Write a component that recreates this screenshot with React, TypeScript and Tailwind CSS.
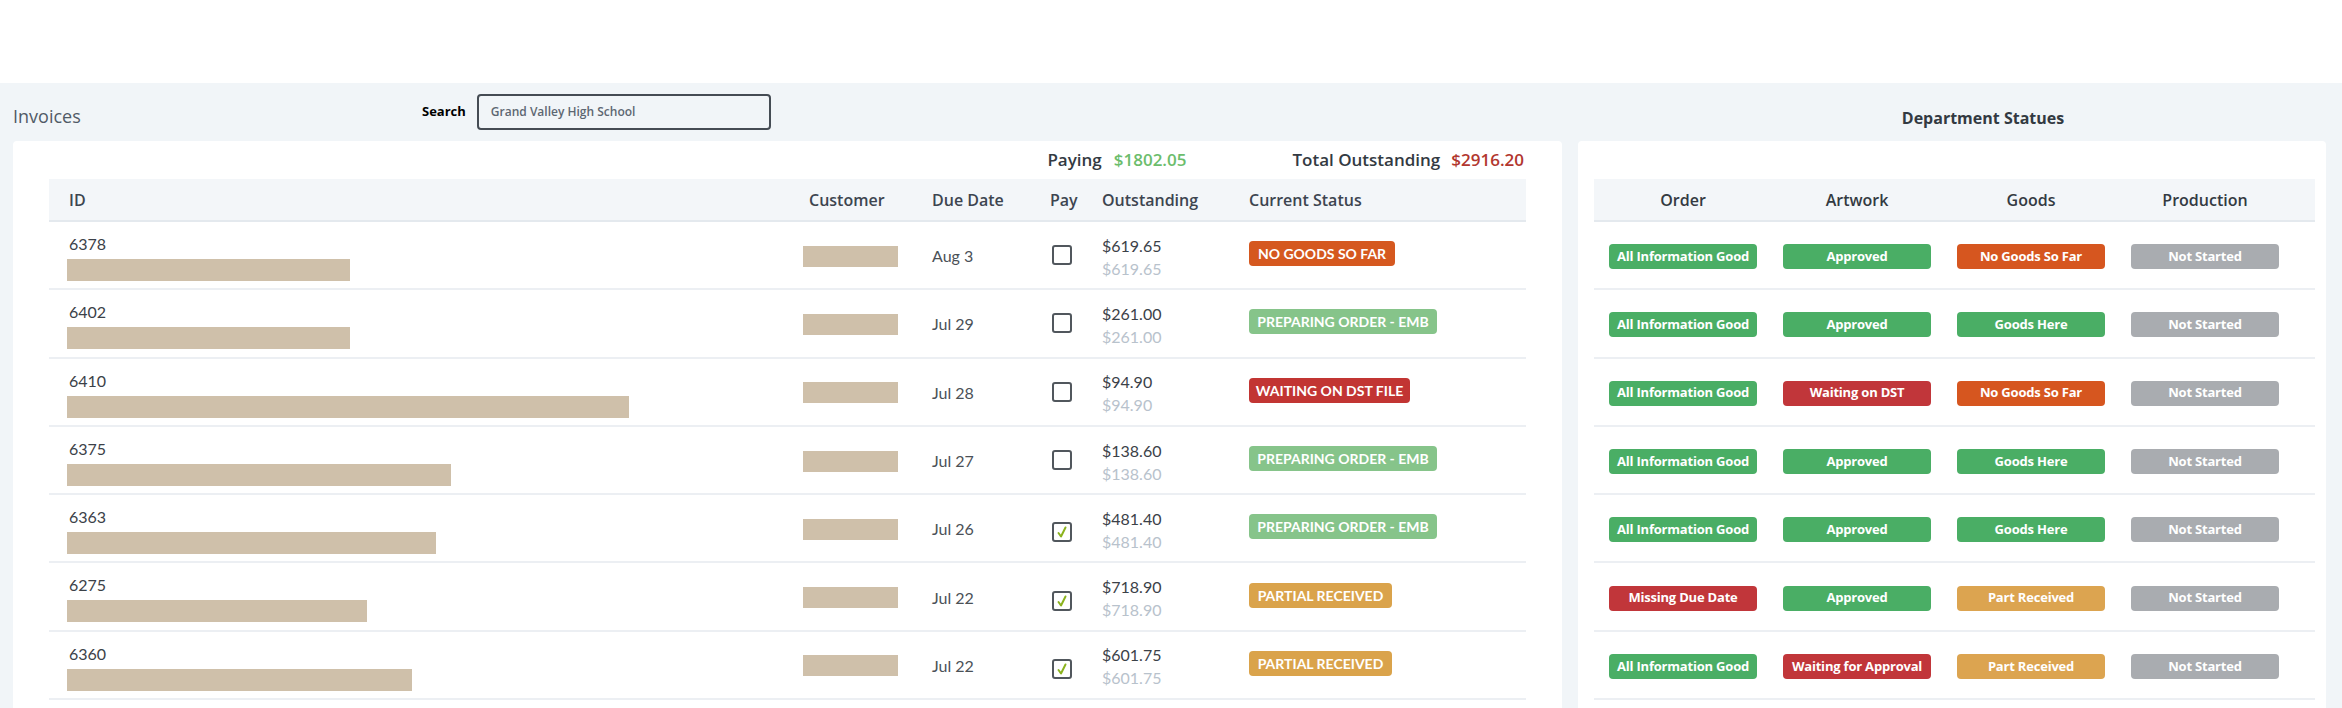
import React from "react";

type Row = {
  id: string;
  bar: number;
  date: string;
  checked: boolean;
  amt: string;
  status: string;
  sc: string;
  sw: string;
};

const rows: Row[] = [
  { id: "6378", bar: 283, date: "Aug 3", checked: false, amt: "$619.65", status: "NO GOODS SO FAR", sc: "bg-[#d5581f]", sw: "w-[146px]" },
  { id: "6402", bar: 283, date: "Jul 29", checked: false, amt: "$261.00", status: "PREPARING ORDER - EMB", sc: "bg-[#86c48a]", sw: "w-[188px]" },
  { id: "6410", bar: 562, date: "Jul 28", checked: false, amt: "$94.90", status: "WAITING ON DST FILE", sc: "bg-[#c23533]", sw: "w-[161px]" },
  { id: "6375", bar: 384, date: "Jul 27", checked: false, amt: "$138.60", status: "PREPARING ORDER - EMB", sc: "bg-[#86c48a]", sw: "w-[188px]" },
  { id: "6363", bar: 369, date: "Jul 26", checked: true, amt: "$481.40", status: "PREPARING ORDER - EMB", sc: "bg-[#86c48a]", sw: "w-[188px]" },
  { id: "6275", bar: 300, date: "Jul 22", checked: true, amt: "$718.90", status: "PARTIAL RECEIVED", sc: "bg-[#daa34b]", sw: "w-[143px]" },
  { id: "6360", bar: 345, date: "Jul 22", checked: true, amt: "$601.75", status: "PARTIAL RECEIVED", sc: "bg-[#daa34b]", sw: "w-[143px]" },
];

const G = "bg-[#4aae65]";
const O = "bg-[#d6561f]";
const R = "bg-[#c1363a]";
const Y = "bg-[#dca450]";
const N = "bg-[#a9acb0]";

const dept: [string, string][][] = [
  [["All Information Good", G], ["Approved", G], ["No Goods So Far", O], ["Not Started", N]],
  [["All Information Good", G], ["Approved", G], ["Goods Here", G], ["Not Started", N]],
  [["All Information Good", G], ["Waiting on DST", R], ["No Goods So Far", O], ["Not Started", N]],
  [["All Information Good", G], ["Approved", G], ["Goods Here", G], ["Not Started", N]],
  [["All Information Good", G], ["Approved", G], ["Goods Here", G], ["Not Started", N]],
  [["Missing Due Date", R], ["Approved", G], ["Part Received", Y], ["Not Started", N]],
  [["All Information Good", G], ["Waiting for Approval", R], ["Part Received", Y], ["Not Started", N]],
];

function Checkbox({ checked }: { checked: boolean }) {
  return (
    <div className={`w-[20px] h-[20px] border-2 border-[#51575d] rounded-[3px] flex items-center justify-center ${checked ? "mt-[8px]" : ""}`}>
      {checked && (
        <svg width="14" height="14" viewBox="0 0 14 14">
          <path d="M3.5 8 L6 11.5 L10.5 2.5" fill="none" stroke="#8cb31f" strokeWidth="2" strokeLinecap="round" strokeLinejoin="round" />
        </svg>
      )}
    </div>
  );
}

export default function App() {
  return (
    <div className="w-[2342px] h-[708px] overflow-hidden bg-[#f1f5f8] font-['Open_Sans',sans-serif]">
      <div className="h-[83px] bg-white" />
      <div className="flex gap-[16px] pl-[13px]">
        {/* Left column */}
        <div className="w-[1549px] shrink-0">
          <div className="h-[58px] flex items-center">
            <div className="w-[409px] mt-[8px] text-[18px] text-[#505a66]">Invoices</div>
            <span className="text-[13px] font-bold text-black">Search</span>
            <div className="ml-[11px] w-[294px] h-[36px] border-2 border-[#454c54] rounded-[4px] flex items-center pl-[12px] text-[12px] font-semibold text-[#5d6772]">
              Grand Valley High School
            </div>
          </div>
          <div className="bg-white rounded-[4px] px-[36px] pb-[40px]">
            <div className="h-[38px] flex items-center justify-end pr-[2px] text-[17px] font-semibold">
              <span className="text-[#333a42]">Paying</span>
              <span className="ml-[12px] text-[#6cbd6c]">$1802.05</span>
              <span className="ml-[106px] text-[#333a42]">Total Outstanding</span>
              <span className="ml-[11px] text-[#b2372f]">$2916.20</span>
            </div>
            <div className="h-[43px] bg-[#f3f6f9] border-b-2 border-[#e4e9ee] grid grid-cols-[734px_129px_118px_52px_147px_1fr] items-center pl-[20px] text-[16px] font-semibold text-[#3d4550]">
              <div>ID</div>
              <div className="pl-[6px]">Customer</div>
              <div>Due Date</div>
              <div>Pay</div>
              <div>Outstanding</div>
              <div>Current Status</div>
            </div>
            {rows.map((r) => (
              <div
                key={r.id}
                className="h-[68.3px] border-b-2 border-[#eceff3] grid grid-cols-[736px_129px_118px_52px_147px_1fr] items-center pl-[18px] font-['Lato',sans-serif] text-[16px] text-[#3b4148]"
              >
                <div className="self-start pt-[12px]">
                  <div className="pl-[2px] leading-[20px]">{r.id}</div>
                  <div className="mt-[5px] h-[22px] bg-[#cfc0aa]" style={{ width: r.bar }} />
                </div>
                <div className="mt-[2px] w-[95px] h-[21px] bg-[#cfc0aa]" />
                <div className="mt-[2px] text-[#4b5157]">{r.date}</div>
                <div className="pl-[2px]">
                  <Checkbox checked={r.checked} />
                </div>
                <div className="mt-[3px] leading-[23px]">
                  <div>{r.amt}</div>
                  <div className="text-[#b8c2cc]">{r.amt}</div>
                </div>
                <div>
                  <div className={`${r.sw} ${r.sc} mb-[3px] h-[25px] rounded-[4px] flex items-center justify-center text-white text-[14px] font-bold`}>
                    {r.status}
                  </div>
                </div>
              </div>
            ))}
          </div>
        </div>

        {/* Right column */}
        <div className="w-[748px] shrink-0">
          <div className="h-[58px] flex items-center justify-center pl-[62px]">
            <div className="mt-[12px] text-[16px] font-bold text-[#333a42]">Department Statues</div>
          </div>
          <div className="bg-white rounded-[4px] pl-[16px] pr-[11px] pt-[38px] pb-[40px]">
            <div className="h-[43px] bg-[#f3f6f9] border-b-2 border-[#e4e9ee] grid grid-cols-[174px_174px_174px_174px_1fr] items-center pl-[2px] text-[16px] font-semibold text-[#333a42]">
              <div className="text-center">Order</div>
              <div className="text-center">Artwork</div>
              <div className="text-center">Goods</div>
              <div className="text-center">Production</div>
              <div />
            </div>
            {dept.map((row, i) => (
              <div key={i} className="h-[68.3px] border-b-2 border-[#eceff3] grid grid-cols-[174px_174px_174px_174px_1fr] items-center pl-[2px]">
                {row.map(([label, c], j) => (
                  <div key={j} className="flex justify-center">
                    <div className={`${c} mt-[3px] w-[148px] h-[25px] rounded-[4px] flex items-center justify-center text-white text-[13px] font-bold tracking-[-0.2px]`}>
                      {label}
                    </div>
                  </div>
                ))}
                <div />
              </div>
            ))}
          </div>
        </div>
      </div>
    </div>
  );
}
